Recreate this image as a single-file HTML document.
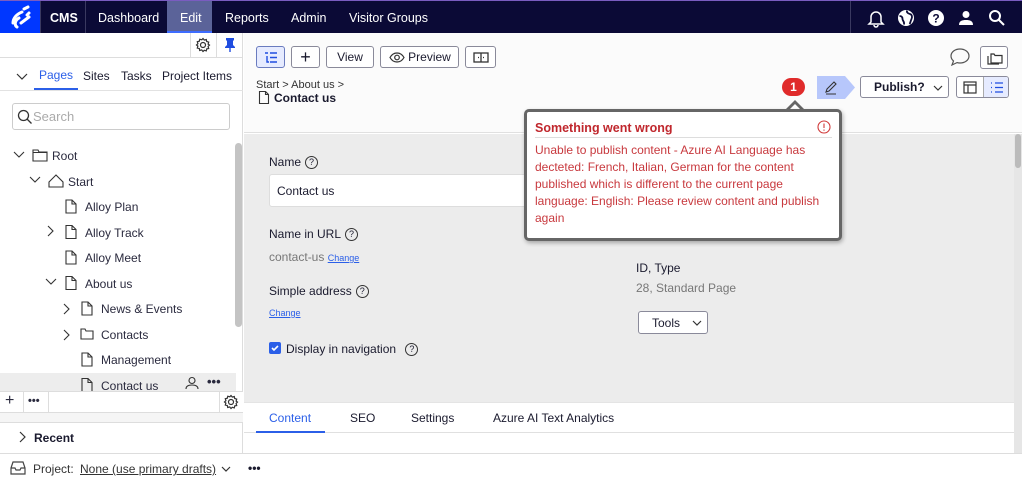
<!DOCTYPE html>
<html><head><meta charset="utf-8"><style>
*{box-sizing:border-box;margin:0;padding:0}
body{width:1022px;height:483px;overflow:hidden;font-family:"Liberation Sans",sans-serif;font-size:12px;color:#1a1a2e;background:#fff;position:relative}
.abs{position:absolute}
.top{left:0;top:0;width:1022px;height:33px;background:#0b0a36;border-top:1px solid #7a5cc0}
.top span{position:absolute;top:10px;color:#fff;font-size:12.5px}
.sep{position:absolute;top:0;width:1px;height:33px;background:#3a3960}
.btn{position:absolute;border:1px solid #8a8a9a;border-radius:3px;background:#fff;height:22px;font-size:12px;display:flex;align-items:center;justify-content:center;color:#1a1a2e}
.tree{position:absolute;font-size:12px;color:#2a2a3e}
svg{position:absolute}
.lbl{position:absolute;font-size:12px;color:#1a1a2e}
.q{display:inline-block;width:13px;height:13px;border:1.3px solid #333;border-radius:50%;font-size:9px;text-align:center;line-height:11px;vertical-align:middle;margin-left:4px}
</style></head><body>
<div class="abs top">
 <div class="abs" style="left:0;top:0;width:40px;height:32px;background:#0037ff"></div>
 <svg style="left:8px;top:4px" width="24" height="24" viewBox="0 0 24 24" fill="none" stroke="#fff" stroke-width="3" stroke-linecap="round"><path d="M5 18c0-5 4-9 9-11M9 22c-3-2-2-7 2-9M13 18l8-6M16 4l4-2M19 10l2-2"/></svg>
 <div class="sep" style="left:40px"></div>
 <span style="left:50px;font-weight:bold">CMS</span>
 <div class="sep" style="left:85px"></div>
 <span style="left:98px">Dashboard</span>
 <div class="abs" style="left:167px;top:0;width:45px;height:32px;background:#5b6399;border-bottom:2px solid #3d6cff"></div>
 <span style="left:180px">Edit</span>
 <span style="left:225px">Reports</span>
 <span style="left:291px">Admin</span>
 <span style="left:349px">Visitor Groups</span>
 <div class="sep" style="left:850px"></div>
 <svg style="left:866px;top:7px" width="20" height="20" viewBox="0 0 20 20" fill="none" stroke="#fff" stroke-width="1.5"><path d="M5 14V9a5 5 0 0110 0v5l2 2H3zM8 17a2 2 0 004 0"/></svg>
 <svg style="left:897px;top:8px" width="18" height="18" viewBox="0 0 18 18"><circle cx="9" cy="9" r="8" fill="#fff"/><path d="M2.5 7c2 0 3 1 3 3s2 2 1.5 5.5M10 1.5c-.5 2 1 3 3 3.5s2.5 3 1.5 5-1 4-2 5" stroke="#0b0a36" stroke-width="1.8" fill="none"/></svg>
 <svg style="left:927px;top:8px" width="18" height="18" viewBox="0 0 18 18"><circle cx="9" cy="9" r="8" fill="#fff"/><text x="9" y="13.5" font-size="12" font-weight="bold" text-anchor="middle" fill="#0b0a36" font-family="Liberation Sans">?</text></svg>
 <svg style="left:957px;top:8px" width="18" height="18" viewBox="0 0 18 18" fill="#fff"><circle cx="9" cy="5.5" r="3.5"/><path d="M2 16c0-4 3-5 7-5s7 1 7 5z"/></svg>
 <svg style="left:988px;top:8px" width="18" height="18" viewBox="0 0 18 18" fill="none" stroke="#fff" stroke-width="2"><circle cx="7" cy="7" r="5"/><path d="M11 11l5 5"/></svg>
</div>

<div class="abs" style="left:0;top:33px;width:243px;height:422px;border-right:1px solid #ddd;background:#fff"></div>
<div class="abs" style="left:0;top:57px;width:243px;height:1px;background:#ddd"></div>
<div class="abs" style="left:190px;top:33px;width:1px;height:24px;background:#ddd"></div>
<div class="abs" style="left:216px;top:33px;width:1px;height:24px;background:#ddd"></div>
<svg style="left:195px;top:37px" width="16" height="16" viewBox="0 0 16 16" fill="none" stroke="#333" stroke-width="1.2"><circle cx="8" cy="8" r="2.5"/><path d="M8 1.5l1.3 1.6 2-.6.4 2 2 .6-.6 2 1.4 1-1.4 1.4.6 2-2 .4-.4 2-2-.6L8 14.5l-1.3-1.6-2 .6-.4-2-2-.4.6-2L1.5 8l1.4-1.3-.6-2 2-.5.5-2 2 .6z"/></svg>
<svg style="left:222px;top:37px" width="16" height="16" viewBox="0 0 16 16" fill="#1f4de0"><path d="M4 1h8v2l-1 1v4l2 2v1H3v-1l2-2V4L4 3z"/><rect x="7.3" y="11" width="1.4" height="4"/></svg>
<svg style="left:16px;top:71px" width="12" height="10" viewBox="0 0 12 10" fill="none" stroke="#333" stroke-width="1.2"><path d="M1 3l5 5 5-5"/></svg>
<div class="lbl" style="left:39px;top:68px;color:#2b5fe8">Pages</div>
<div class="abs" style="left:34px;top:88px;width:44px;height:2px;background:#2b5fe8"></div>
<div class="lbl" style="left:83px;top:69px">Sites</div>
<div class="lbl" style="left:121px;top:69px">Tasks</div>
<div class="lbl" style="left:162px;top:69px">Project Items</div>
<div class="abs" style="left:0;top:90px;width:243px;height:1px;background:#e2e2e2"></div>
<div class="abs" style="left:12px;top:103px;width:218px;height:27px;border:1px solid #ccc;border-radius:3px"></div>
<svg style="left:17px;top:109px" width="16" height="16" viewBox="0 0 16 16" fill="none" stroke="#333" stroke-width="1.3"><circle cx="6.5" cy="6.5" r="5"/><path d="M10 10l4.5 4.5"/></svg>
<div class="lbl" style="left:33px;top:109px;color:#aaa;font-size:13px">Search</div>

<div class="abs" style="left:0;top:373px;width:236px;height:19px;background:#ededed"></div>
<div class="abs" style="left:235px;top:143px;width:7px;height:184px;background:#c4c4c4;border-radius:4px"></div>
<svg style="left:0;top:0" width="243" height="400" fill="none" stroke="#333" stroke-width="1.1">
 <path d="M14 152l5 5 5-5M30 177l5 5 5-5M46 279l5 5 5-5M48 226l5 5-5 5M64 304l5 5-5 5M64 330l5 5-5 5"/>
 <path d="M33 150h5l1 2h8v9H33z M33 152.5h14"/>
 <path d="M49 182l7-7 7 7v5H49z"/>
 <path d="M66 200h6l4 4v9H66z M72 200v4h4"/>
 <path d="M66 225.5h6l4 4v9H66z M72 225.5v4h4"/>
 <path d="M66 251h6l4 4v9H66z M72 251v4h4"/>
 <path d="M66 276.5h6l4 4v9H66z M72 276.5v4h4"/>
 <path d="M82 302h6l4 4v9H82z M88 302v4h4"/>
 <path d="M81 329h4l1 2h7v8H81z"/>
 <path d="M82 353h6l4 4v9H82z M88 353v4h4"/>
 <path d="M82 378.5h6l4 4v9H82z M88 378.5v4h4"/>
 <circle cx="192" cy="380.5" r="3"/><path d="M186 389c0-3 3-4 6-4s6 1 6 4"/>
</svg>
<div class="tree" style="left:52px;top:149px">Root</div>
<div class="tree" style="left:68px;top:175px">Start</div>
<div class="tree" style="left:85px;top:200px">Alloy Plan</div>
<div class="tree" style="left:85px;top:226px">Alloy Track</div>
<div class="tree" style="left:85px;top:251px">Alloy Meet</div>
<div class="tree" style="left:85px;top:277px">About us</div>
<div class="tree" style="left:101px;top:302px">News &amp; Events</div>
<div class="tree" style="left:101px;top:328px">Contacts</div>
<div class="tree" style="left:101px;top:353px">Management</div>
<div class="tree" style="left:101px;top:379px">Contact us</div>
<div class="tree" style="left:207px;top:374px;font-weight:bold;font-size:13px">•••</div>

<div class="abs" style="left:0;top:391px;width:243px;height:22px;background:#fff;border-top:1px solid #ddd;border-bottom:1px solid #ddd"></div>
<div class="abs" style="left:23px;top:391px;width:1px;height:22px;background:#ddd"></div>
<div class="abs" style="left:48px;top:391px;width:1px;height:22px;background:#ddd"></div>
<div class="abs" style="left:219px;top:391px;width:1px;height:22px;background:#ddd"></div>
<div class="tree" style="left:5px;top:392px;font-size:16px">+</div>
<div class="tree" style="left:28px;top:395px;font-weight:bold;font-size:11px">•••</div>
<svg style="left:223px;top:394px" width="16" height="16" viewBox="0 0 16 16" fill="none" stroke="#333" stroke-width="1.2"><circle cx="8" cy="8" r="2.5"/><path d="M8 1.5l1.3 1.6 2-.6.4 2 2 .6-.6 2 1.4 1-1.4 1.4.6 2-2 .4-.4 2-2-.6L8 14.5l-1.3-1.6-2 .6-.4-2-2-.4.6-2L1.5 8l1.4-1.3-.6-2 2-.5.5-2 2 .6z"/></svg>
<div class="abs" style="left:0;top:413px;width:243px;height:10px;background:#f5f5f5;border-bottom:1px solid #ddd"></div>
<svg style="left:18px;top:431px" width="8" height="12" viewBox="0 0 8 12" fill="none" stroke="#333" stroke-width="1.2"><path d="M2 1l5 5-5 5"/></svg>
<div class="lbl" style="left:34px;top:431px;font-weight:bold">Recent</div>

<div class="abs" style="left:0;top:453px;width:1022px;height:30px;background:#fff;border-top:1px solid #ddd"></div>
<svg style="left:10px;top:461px" width="16" height="14" viewBox="0 0 16 14" fill="none" stroke="#444" stroke-width="1.2"><path d="M1 7l2-6h10l2 6v6H1zM1 7h4l1 2h4l1-2h4"/></svg>
<div class="lbl" style="left:33px;top:462px;color:#333">Project:</div>
<div class="lbl" style="left:80px;top:462px;color:#333;text-decoration:underline">None (use primary drafts)</div>
<svg style="left:221px;top:465px" width="10" height="8" viewBox="0 0 10 8" fill="none" stroke="#333" stroke-width="1.2"><path d="M1 2l4 4 4-4"/></svg>
<div class="lbl" style="left:248px;top:461px;font-weight:bold">•••</div>

<div class="abs" style="left:244px;top:33px;width:778px;height:100px;background:#fbfbfb;border-bottom:1px solid #e0e0e0"></div>
<div class="btn" style="left:256px;top:46px;width:29px;background:#e6ebff;border-color:#6a7bbf"><svg style="left:7px;top:5px;position:absolute" width="14" height="12" viewBox="0 0 14 12" fill="none" stroke="#1f4de0" stroke-width="1.4"><path d="M1 1h3M6 1h7M3 4v6h2M6 5.5h7M6 10h7"/></svg></div>
<div class="btn" style="left:291px;top:46px;width:29px;font-size:18px;font-weight:300">+</div>
<div class="btn" style="left:326px;top:46px;width:48px">View</div>
<div class="btn" style="left:380px;top:46px;width:79px;padding-left:20px">Preview<svg style="position:absolute;left:8px;top:5px" width="16" height="11" viewBox="0 0 16 11" fill="none" stroke="#333" stroke-width="1.2"><path d="M1 5.5C3 2 5.5 1 8 1s5 1 7 4.5C13 9 10.5 10 8 10S3 9 1 5.5z"/><circle cx="8" cy="5.5" r="2.3"/></svg></div>
<div class="btn" style="left:465px;top:46px;width:31px"><svg style="position:absolute;left:7px;top:5px" width="16" height="11" viewBox="0 0 16 11" fill="none" stroke="#333" stroke-width="1.3"><rect x="1" y="1" width="14" height="9"/><path d="M8 1v9M5 5.5h1M10 5.5h1"/></svg></div>
<svg style="left:949px;top:47px" width="22" height="20" viewBox="0 0 22 20" fill="none" stroke="#555" stroke-width="1.2"><path d="M11 2c5 0 9 3 9 7s-4 7-9 7c-1 0-2 0-3-.4L3 18l1.5-4C3 12.7 2 11 2 9c0-4 4-7 9-7z"/></svg>
<div class="btn" style="left:980px;top:46px;width:28px;height:23px"><svg style="position:absolute;left:6px;top:4px" width="16" height="14" viewBox="0 0 16 14" fill="none" stroke="#333" stroke-width="1.2"><path d="M4 3h3l1 1.5h7V12H4zM1 5v8h11"/></svg></div>
<div class="lbl" style="left:256px;top:79px;font-size:11px;color:#333">Start &gt; About us &gt;</div>
<svg style="left:258px;top:91px" width="12" height="13" viewBox="0 0 12 13" fill="none" stroke="#333" stroke-width="1.1"><path d="M1.5 .5h6l3 3v9h-9z M7.5 .5v3h3"/></svg>
<div class="lbl" style="left:274px;top:91px;font-weight:bold">Contact us</div>
<div class="abs" style="left:782px;top:78px;width:23px;height:18px;border-radius:9px;background:#e02b2b;color:#fff;font-weight:bold;font-size:12px;text-align:center;line-height:18px">1</div>
<svg style="left:817px;top:76px" width="40" height="23" viewBox="0 0 40 23"><path d="M0 0h28l10 11.5L28 23H0z" fill="#b7c7fb"/><path d="M9 16l1-3 7-7 2 2-7 7zM9 18h10" fill="none" stroke="#333" stroke-width="1.1"/></svg>
<div class="btn" style="left:860px;top:76px;width:89px;font-weight:bold;justify-content:flex-start;padding-left:13px">Publish?<svg style="position:absolute;left:72px;top:8px" width="10" height="7" viewBox="0 0 10 7" fill="none" stroke="#333" stroke-width="1.2"><path d="M1 1l4 4 4-4"/></svg></div>
<div class="btn" style="left:956px;top:76px;width:53px;overflow:hidden"><div style="position:absolute;left:26px;top:0;width:27px;height:22px;background:#e6ebff;border-left:1px solid #aaa"></div><svg style="position:absolute;left:6px;top:4px" width="14" height="13" viewBox="0 0 14 13" fill="none" stroke="#333" stroke-width="1.2"><rect x="1" y="1" width="12" height="11"/><path d="M1 4h12M5 4v8"/></svg><svg style="position:absolute;left:33px;top:4px" width="14" height="13" viewBox="0 0 14 13" fill="none" stroke="#1f4de0" stroke-width="1.3"><path d="M1 2h1M5 2h8M1 6.5h1M5 6.5h8M1 11h1M5 11h8"/></svg></div>

<div class="abs" style="left:244px;top:134px;width:770px;height:268px;background:#ececec"></div>
<div class="abs" style="left:1014px;top:134px;width:8px;height:319px;background:#e6e6e6"></div>
<div class="abs" style="left:1015px;top:134px;width:6px;height:34px;background:#bbb;border-radius:3px"></div>
<div class="lbl" style="left:269px;top:155px">Name<span class="q">?</span></div>
<div class="abs" style="left:269px;top:174px;width:270px;height:33px;background:#fff;border:1px solid #ddd;border-radius:3px"></div>
<div class="lbl" style="left:277px;top:184px">Contact us</div>
<div class="lbl" style="left:269px;top:227px">Name in URL<span class="q">?</span></div>
<div class="lbl" style="left:269px;top:250px;color:#777">contact-us <span style="color:#2b5fe8;text-decoration:underline;font-size:9px">Change</span></div>
<div class="lbl" style="left:269px;top:284px">Simple address<span class="q">?</span></div>
<div class="lbl" style="left:269px;top:308px;color:#2b5fe8;text-decoration:underline;font-size:9px">Change</div>
<div class="abs" style="left:269px;top:342px;width:12px;height:12px;background:#2b5fe8;border-radius:2px"></div>
<svg style="left:270px;top:343px" width="10" height="10" viewBox="0 0 10 10" fill="none" stroke="#fff" stroke-width="1.6"><path d="M2 5l2 2 4-4"/></svg>
<div class="lbl" style="left:286px;top:342px">Display in navigation <span class="q" style="margin-left:6px">?</span></div>
<div class="lbl" style="left:636px;top:261px">ID, Type</div>
<div class="lbl" style="left:636px;top:281px;color:#777">28, Standard Page</div>
<div class="btn" style="left:638px;top:311px;width:70px;height:23px;justify-content:flex-start;padding-left:13px">Tools<svg style="position:absolute;left:53px;top:8px" width="10" height="7" viewBox="0 0 10 7" fill="none" stroke="#333" stroke-width="1.2"><path d="M1 1l4 4 4-4"/></svg></div>

<div class="abs" style="left:244px;top:402px;width:770px;height:31px;background:#fff;border-top:1px solid #e4e4e4;border-bottom:1px solid #e0e0e0"></div>
<div class="lbl" style="left:269px;top:411px;color:#2b5fe8">Content</div>
<div class="abs" style="left:256px;top:431px;width:69px;height:2px;background:#2b5fe8"></div>
<div class="lbl" style="left:350px;top:411px">SEO</div>
<div class="lbl" style="left:411px;top:411px">Settings</div>
<div class="lbl" style="left:493px;top:411px">Azure AI Text Analytics</div>

<svg style="left:783px;top:98px" width="24" height="12" viewBox="0 0 24 12"><path d="M2 12L12 2l10 10z" fill="#666"/><path d="M6 12l6-6 6 6z" fill="#fff"/></svg>
<div class="abs" style="left:524px;top:109px;width:318px;height:132px;background:#fff;border:3px solid #666;border-radius:5px;box-shadow:1px 2px 4px rgba(0,0,0,.3)"></div>
<div class="lbl" style="left:535px;top:121px;color:#c0272d;font-weight:bold;font-size:12.5px">Something went wrong</div>
<svg style="left:817px;top:120px" width="14" height="14" viewBox="0 0 14 14" fill="none" stroke="#d03a3a" stroke-width="1.1"><circle cx="7" cy="7" r="6"/><path d="M7 3.5v4.5M7 9.5v1.2"/></svg>
<div class="abs" style="left:535px;top:137px;width:297px;height:1px;background:#ddd"></div>
<div class="lbl" style="left:535px;top:142px;width:290px;color:#c8393e;font-size:12px;line-height:17px;white-space:nowrap">Unable to publish content - Azure AI Language has<br>decteted: French, Italian, German for the content<br>published which is different to the current page<br>language: English: Please review content and publish<br>again</div>
</body></html>
